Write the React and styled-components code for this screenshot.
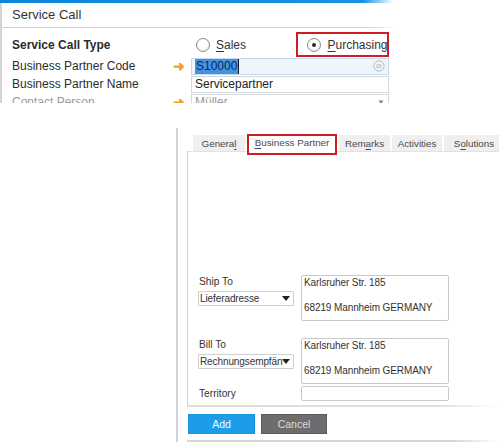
import React from "react";
import styled, { createGlobalStyle } from "styled-components";

const GlobalStyle = createGlobalStyle`
  html, body { margin: 0; padding: 0; background: #fff; }
  body { font-family: "Liberation Sans", Arial, sans-serif; color: #2b2b2b; }
  * { box-sizing: border-box; }
`;

const Page = styled.div`
  width: 499px;
  height: 445px;
  overflow: hidden;
  background: #fff;
`;

/* ---------- top panel ---------- */

const TopPanel = styled.section`
  width: 394px;
  height: 103px;
  overflow: hidden;
`;

const BlueLine = styled.div`
  height: 3px;
  background: linear-gradient(to right, #0b86dc 0%, #1592e6 92%, rgba(21, 146, 230, 0) 100%);
`;

const PanelBody = styled.div`
  border-left: 2px solid #d3d3d3;
  height: 100px;
`;

const Header = styled.div`
  height: 24px;
  line-height: 24px;
  padding-left: 10px;
  font-size: 13px;
  color: #333;
`;

const FadeLine = styled.div`
  height: ${(p) => p.$h || 1}px;
  background: linear-gradient(to right, ${(p) => p.$c || "#cfcfcf"} 0%, ${(p) => p.$c || "#cfcfcf"} ${(p) => p.$stop || 90}%, rgba(255, 255, 255, 0) 100%);
`;

const Form = styled.div`
  padding-top: 4px;
`;

const Row = styled.div`
  display: grid;
  grid-template-columns: 170px 19px 198px;
  align-items: center;
  height: ${(p) => p.$h}px;
`;

const Label = styled.div`
  padding-left: 10px;
  font-size: 12px;
  font-weight: ${(p) => (p.$bold ? 700 : 400)};
  color: ${(p) => (p.$muted ? "#9a9a9a" : "#2b2b2b")};
  white-space: nowrap;
`;

const Arrow = styled.div`
  color: #f0a41c;
  font-size: 14px;
  font-weight: 700;
  line-height: 1;
  padding-left: 1px;
`;

const RadioGroup = styled.div`
  display: flex;
  align-items: center;
  height: 100%;
  padding-left: 3px;
`;

const RadioItem = styled.label`
  display: flex;
  align-items: center;
  gap: 6px;
  height: 25px;
  font-size: 12px;
  color: #333;
  width: ${(p) => p.$w}px;
  margin-left: ${(p) => p.$ml || 0}px;
  padding-left: ${(p) => p.$pl || 0}px;
  border: ${(p) => (p.$marked ? "2px solid #cf1b24" : "2px solid transparent")};
  white-space: nowrap;
  overflow: hidden;
`;

const RadioCircle = styled.span`
  width: 14px;
  height: 14px;
  border-radius: 50%;
  border: 1px solid #8c8c8c;
  background: radial-gradient(circle at 50% 40%, #fff 40%, #e4e4e4 100%);
  display: flex;
  align-items: center;
  justify-content: center;
  flex: none;
  &::after {
    content: "";
    width: 4px;
    height: 4px;
    border-radius: 50%;
    background: ${(p) => (p.$checked ? "#2a2a2a" : "transparent")};
  }
`;

const U = styled.span`
  text-decoration: underline;
  text-underline-offset: 2px;
`;

const Field = styled.div`
  height: 17px;
  border: 1px solid ${(p) => (p.$focus ? "#c6d8ec" : "#d4d7db")};
  background: ${(p) => (p.$focus ? "#eef6fd" : "#fff")};
  font-size: 12px;
  line-height: 15px;
  padding: 0 3px;
  display: flex;
  align-items: center;
  color: ${(p) => (p.$muted ? "#999" : "#222")};
`;

const Selected = styled.span`
  background: #4392de;
  color: #0d2a63;
  padding: 0 1px;
  line-height: 15px;
  border-right: 1px solid #1a1a1a;
`;

const FieldIcon = styled.svg`
  margin-left: auto;
  flex: none;
`;

const Caret = styled.span`
  margin-left: auto;
  font-size: 8px;
  color: #888;
`;

/* ---------- second window ---------- */

const Window = styled.section`
  margin: 25px 0 0 176px;
  width: 323px;
  height: 314px;
  border-left: 2px solid #d2d2d2;
  padding: 6px 0 0 9px;
  display: flex;
  flex-direction: column;
`;

const TabStrip = styled.div`
  display: flex;
  align-items: flex-end;
  gap: 2px;
  height: 17px;
  padding-left: 6px;
  position: relative;
  z-index: 1;
`;

const Tab = styled.div`
  flex: none;
  width: ${(p) => p.$w}px;
  height: ${(p) => (p.$active ? 21 : 16)}px;
  margin-bottom: ${(p) => (p.$active ? -4 : 0)}px;
  padding-bottom: ${(p) => (p.$active ? 4 : 0)}px;
  background: ${(p) => (p.$active ? "#fff" : "#efefef")};
  border: ${(p) => (p.$active ? "2px solid #cf1b24" : "none")};
  font-size: 9.8px;
  color: #4a4a4a;
  display: flex;
  align-items: center;
  justify-content: center;
  white-space: nowrap;
`;

const TabBody = styled.div`
  height: 254px;
  border-left: 1px solid #cfcfcf;
  border-top: 1px solid #e2e2e2;
  padding: 123px 0 0 10px;
  display: flex;
  flex-direction: column;
`;

const Section = styled.div`
  display: grid;
  grid-template-columns: 96px 148px;
  column-gap: 7px;
  align-items: ${(p) => p.$align || "start"};
  margin-top: ${(p) => p.$mt || 0}px;
`;

const Stack = styled.div`
  display: flex;
  flex-direction: column;
  gap: 2px;
`;

const SmallLabel = styled.div`
  font-size: 10.2px;
  line-height: 14px;
  color: #333;
  padding-left: 1px;
`;

const Select = styled.div`
  height: 15px;
  border: 1px solid #cfcfcf;
  border-radius: 1px;
  display: flex;
  align-items: center;
  font-size: 10px;
  letter-spacing: -0.1px;
  color: #333;
  padding: 0 3px 0 1px;
`;

const SelectText = styled.span`
  flex: 1;
  overflow: hidden;
  white-space: nowrap;
`;

const Triangle = styled.span`
  flex: none;
  width: 0;
  height: 0;
  border-left: 4px solid transparent;
  border-right: 4px solid transparent;
  border-top: 5px solid #222;
  margin-left: ${(p) => p.$ml || 8}px;
`;

const Address = styled.div`
  height: 46px;
  border: 1px solid #c9c9c9;
  border-radius: 2px;
  padding: 1px 2px;
  font-size: 10px;
  letter-spacing: -0.1px;
  line-height: 12.5px;
  color: #333;
  white-space: pre;
`;

const Input = styled.div`
  height: 15px;
  border: 1px solid #c9c9c9;
  border-radius: 2px;
`;

const Buttons = styled.div`
  display: flex;
  gap: 6px;
  margin: 7px 0 0 1px;
`;

const Button = styled.button`
  width: ${(p) => p.$w}px;
  height: 20px;
  border: 1px solid ${(p) => (p.$primary ? "#1896e2" : "#5c5c5c")};
  background: ${(p) => (p.$primary ? "#1c9de8" : "#6d6d6d")};
  color: ${(p) => (p.$primary ? "#f3faff" : "#dcdcdc")};
  font-family: "Liberation Sans", Arial, sans-serif;
  font-size: 10.5px;
  padding: 0;
`;

const Spacer = styled.div`
  flex: 1;
`;

const ListIcon = () => (
  <FieldIcon width="12" height="12" viewBox="0 0 12 12">
    <circle cx="6" cy="6" r="5.2" fill="#f4f4f4" stroke="#bdbdbd" strokeWidth="1" />
    <line x1="3.2" y1="5" x2="8.8" y2="5" stroke="#b5b5b5" strokeWidth="1" />
    <line x1="3.2" y1="7.2" x2="8.8" y2="7.2" stroke="#b5b5b5" strokeWidth="1" />
  </FieldIcon>
);

const App = () => (
  <Page>
    <GlobalStyle />
    <TopPanel>
      <BlueLine />
      <PanelBody>
        <Header>Service Call</Header>
        <FadeLine $c="#d0d0d0" $stop={94} />
        <Form>
          <Row $h={25}>
            <Label $bold>Service Call Type</Label>
            <span />
            <RadioGroup>
              <RadioItem $w={96} $pl={0}>
                <RadioCircle />
                <span>
                  <U>S</U>ales
                </span>
              </RadioItem>
              <RadioItem $w={93} $ml={7} $pl={9} $marked>
                <RadioCircle $checked />
                <span>
                  <U>P</U>urchasing
                </span>
              </RadioItem>
            </RadioGroup>
          </Row>
          <Row $h={18}>
            <Label>Business Partner Code</Label>
            <Arrow>➜</Arrow>
            <Field $focus>
              <Selected>S10000</Selected>
              <ListIcon />
            </Field>
          </Row>
          <Row $h={18}>
            <Label>Business Partner Name</Label>
            <span />
            <Field>Servicepartner</Field>
          </Row>
          <Row $h={18}>
            <Label $muted>Contact Person</Label>
            <Arrow>➜</Arrow>
            <Field $muted>
              Müller
              <Caret>▼</Caret>
            </Field>
          </Row>
        </Form>
      </PanelBody>
    </TopPanel>

    <Window>
      <TabStrip>
        <Tab $w={52}>
          Genera<U>l</U>
        </Tab>
        <Tab $w={90} $active>
          <span>
            <U>B</U>usiness Partner
          </span>
        </Tab>
        <Tab $w={51}>
          Rem<U>a</U>rks
        </Tab>
        <Tab $w={50}>Activities</Tab>
        <Tab $w={60}>
          S<U>o</U>lutions
        </Tab>
      </TabStrip>
      <TabBody>
        <Section>
          <Stack>
            <SmallLabel>Ship To</SmallLabel>
            <Select>
              <SelectText>Lieferadresse</SelectText>
              <Triangle />
            </Select>
          </Stack>
          <Address>{"Karlsruher Str. 185\n\n68219 Mannheim GERMANY"}</Address>
        </Section>
        <Section $mt={17}>
          <Stack>
            <SmallLabel>Bill To</SmallLabel>
            <Select>
              <SelectText>Rechnungsempfänger</SelectText>
              <Triangle $ml={-1} />
            </Select>
          </Stack>
          <Address>{"Karlsruher Str. 185\n\n68219 Mannheim GERMANY"}</Address>
        </Section>
        <Section $mt={2} $align="center">
          <SmallLabel>Territory</SmallLabel>
          <Input />
        </Section>
      </TabBody>
      <FadeLine $h={2} $c="#dedede" $stop={80} />
      <Buttons>
        <Button $w={67} $primary>
          Add
        </Button>
        <Button $w={66}>Cancel</Button>
      </Buttons>
      <Spacer />
      <FadeLine $h={2} $c="#d6d6d6" $stop={85} />
    </Window>
  </Page>
);

export default App;
